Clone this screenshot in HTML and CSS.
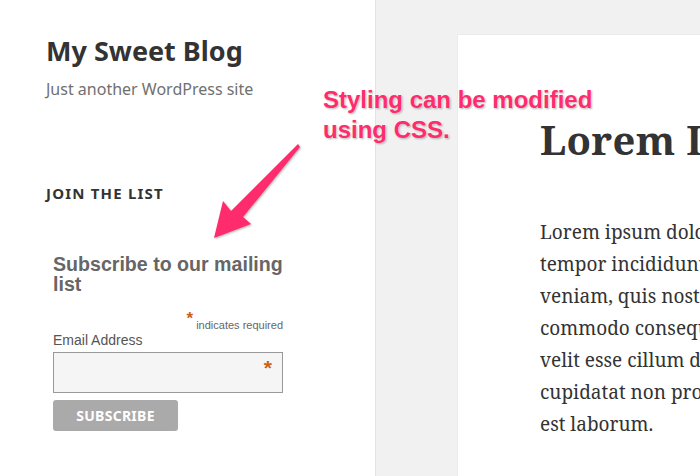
FILE: index.html
```html
<!DOCTYPE html>
<html>
<head>
<meta charset="utf-8">
<link rel="stylesheet" href="styles.css">
</head>
<body>
<div class="page">
  <aside class="sidebar">
    <h1 class="site-title">My Sweet Blog</h1>
    <p class="site-desc">Just another WordPress site</p>
    <h2 class="widget-title">JOIN THE LIST</h2>
    <form class="mc-form">
      <h3 class="mc-title">Subscribe to our mailing list</h3>
      <div class="mc-req"><span class="ast">*</span> indicates required</div>
      <label class="mc-label">Email Address</label>
      <div class="mc-input"><span class="ast big">*</span></div>
      <div class="mc-btn">SUBSCRIBE</div>
    </form>
  </aside>
  <main class="main">
    <article class="post">
      <h1 class="post-title">Lorem Ipsum</h1>
      <p class="post-text">Lorem ipsum dolor<br>tempor incididunt<br>veniam, quis nostr<br>commodo consequat<br>velit esse cillum do<br>cupidatat non proid<br>est laborum.</p>
    </article>
  </main>
</div>
<div class="note">Styling can be modified<br>using CSS.</div>
<svg class="arrow" width="110" height="120" viewBox="0 0 110 120">
  <path d="M98 14 L100 17 L43 87 L51 94 L14 108 L23 71 L31 81 Z" fill="#fe2c6c"/>
</svg>
</body>
</html>
```
FILE: styles.css
```css
html, body { margin: 0; padding: 0; }
body { width: 700px; height: 476px; overflow: hidden; position: relative; background: #f1f1f1; }
.page { display: flex; height: 476px; }
.sidebar {
  width: 376px; flex: none; background: #fff; border-right: 1px solid #e3e3e3;
  box-sizing: border-box; padding: 33px 0 0 46px;
  font-family: "Noto Sans", sans-serif;
}
.site-title { margin: 0; font-size: 27px; line-height: 36px; font-weight: 700; color: #333; }
.site-desc { margin: 8px 0 0; font-size: 16px; line-height: 24px; color: #707070; }
.widget-title { margin: 82px 0 0; font-size: 15px; line-height: 20px; font-weight: 700; color: #333; letter-spacing: 0.08em; }
.mc-form { margin: 51px 0 0 7px; width: 230px; font-family: "Liberation Sans", Arial, sans-serif; }
.mc-title { margin: 0; font-size: 19.6px; line-height: 20px; font-weight: 700; color: #666; }
.mc-req { text-align: right; font-size: 11px; color: #666; margin-top: 20px; line-height: 14px; height: 14px; }
.ast { color: #c9601c; font-weight: 700; font-size: 17px; vertical-align: 5px; line-height: 10px; }
.mc-label { display: block; font-size: 14px; line-height: 18px; color: #555; margin-top: 3px; }
.mc-input { height: 39px; border: 1px solid #999; background: #f5f5f5; margin-top: 3px; display: flex; justify-content: flex-end; padding-right: 10px; }
.mc-input .big { font-size: 21px; line-height: 30px; vertical-align: 0; }
.mc-btn {
  margin-top: 7px; width: 125px; height: 31px; border-radius: 3px; background: #aaa; color: #fff;
  font-family: "Noto Sans", sans-serif; font-weight: 700; font-size: 14px; line-height: 31px; text-align: center; letter-spacing: 0.02em;
}
.main { flex: 1; padding: 35px 0 0 82px; }
.post { background: #fff; height: 441px; box-shadow: 0 0 1px rgba(0,0,0,0.15); padding: 0 0 0 82px; overflow: hidden; white-space: nowrap; font-family: "Noto Serif", "DejaVu Serif", serif; color: #333; }
.post-title { margin: 79px 0 0; font-size: 40px; line-height: 52px; font-weight: 700; letter-spacing: 0.3px; }
.post-text { margin: 50px 0 0; font-size: 19px; line-height: 32px; }
.note {
  position: absolute; left: 323px; top: 85px; font-family: "Liberation Sans", Arial, sans-serif;
  font-weight: 700; font-size: 24px; line-height: 30px; color: #fe2c6c;
  text-shadow: 0 0 2px #fff, 1px 1px 2px rgba(0,0,0,0.35);
}
.arrow { position: absolute; left: 200px; top: 130px; filter: drop-shadow(1px 1px 1px rgba(0,0,0,0.3)); }
```
